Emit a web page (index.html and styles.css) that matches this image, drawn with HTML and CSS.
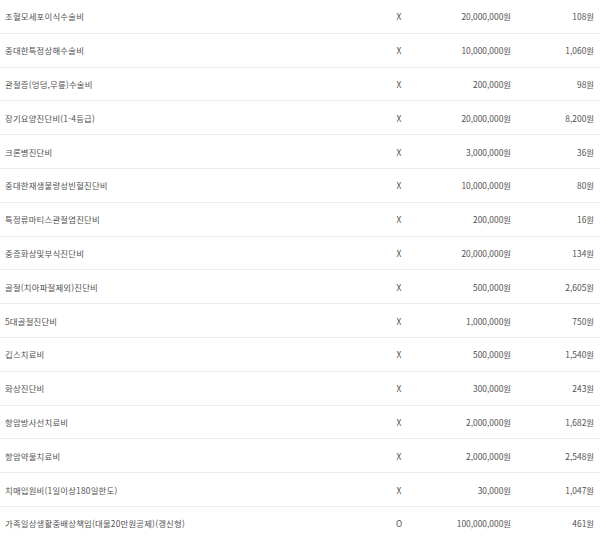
FILE: index.html
```html
<!DOCTYPE html>
<html lang="ko">
<head>
<meta charset="utf-8">
<link rel="stylesheet" href="styles.css">
</head>
<body>
<div class="table">
  <div class="row"><span class="name">조혈모세포이식수술비</span><span class="flag">X</span><span class="amount">20,000,000원</span><span class="premium">108원</span></div>
  <div class="row"><span class="name">중대한특정상해수술비</span><span class="flag">X</span><span class="amount">10,000,000원</span><span class="premium">1,060원</span></div>
  <div class="row"><span class="name">관절증(엉덩,무릎)수술비</span><span class="flag">X</span><span class="amount">200,000원</span><span class="premium">98원</span></div>
  <div class="row"><span class="name">장기요양진단비(1-4등급)</span><span class="flag">X</span><span class="amount">20,000,000원</span><span class="premium">8,200원</span></div>
  <div class="row"><span class="name">크론병진단비</span><span class="flag">X</span><span class="amount">3,000,000원</span><span class="premium">36원</span></div>
  <div class="row"><span class="name">중대한재생불량성빈혈진단비</span><span class="flag">X</span><span class="amount">10,000,000원</span><span class="premium">80원</span></div>
  <div class="row"><span class="name">특정류마티스관절염진단비</span><span class="flag">X</span><span class="amount">200,000원</span><span class="premium">16원</span></div>
  <div class="row"><span class="name">중증화상및부식진단비</span><span class="flag">X</span><span class="amount">20,000,000원</span><span class="premium">134원</span></div>
  <div class="row"><span class="name">골절(치아파절제외)진단비</span><span class="flag">X</span><span class="amount">500,000원</span><span class="premium">2,605원</span></div>
  <div class="row"><span class="name">5대골절진단비</span><span class="flag">X</span><span class="amount">1,000,000원</span><span class="premium">750원</span></div>
  <div class="row"><span class="name">깁스치료비</span><span class="flag">X</span><span class="amount">500,000원</span><span class="premium">1,540원</span></div>
  <div class="row"><span class="name">화상진단비</span><span class="flag">X</span><span class="amount">300,000원</span><span class="premium">243원</span></div>
  <div class="row"><span class="name">항암방사선치료비</span><span class="flag">X</span><span class="amount">2,000,000원</span><span class="premium">1,682원</span></div>
  <div class="row"><span class="name">항암약물치료비</span><span class="flag">X</span><span class="amount">2,000,000원</span><span class="premium">2,548원</span></div>
  <div class="row"><span class="name">치매입원비(1일이상180일한도)</span><span class="flag">X</span><span class="amount">30,000원</span><span class="premium">1,047원</span></div>
  <div class="row"><span class="name">가족일상생활중배상책임(대물20만원공제)(갱신형)</span><span class="flag">O</span><span class="amount">100,000,000원</span><span class="premium">461원</span></div>
</div>
</body>
</html>
```
FILE: styles.css
```css
html, body {
  margin: 0;
  padding: 0;
  background: #fff;
}
body {
  font-family: "Noto Sans CJK KR", "Noto Sans", sans-serif;
  font-size: 8.4px;
  color: #505050;
}
.table {
  display: flex;
  flex-direction: column;
}
.row {
  display: grid;
  grid-template-columns: 360px 78px 73px 83px;
  padding: 0 6px 0 0;
  height: 33.8px;
  box-sizing: border-box;
  align-items: center;
  border-bottom: 1px solid #ececec;
}
.row > span {
  white-space: nowrap;
}
.name {
  padding-left: 5px;
  letter-spacing: 0.2px;
}
.flag {
  text-align: center;
}
.amount, .premium {
  text-align: right;
}
```
